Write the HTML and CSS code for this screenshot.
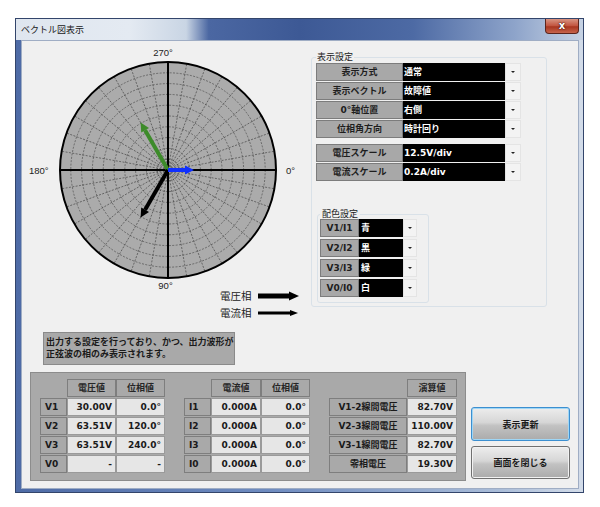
FILE: index.html
```html
<!DOCTYPE html>
<html lang="ja">
<head>
<meta charset="utf-8">
<title>ベクトル図表示</title>
<link rel="stylesheet" href="styles.css">
</head>
<body>
<div class="window">
  <div class="titlebar">
    <span class="title">ベクトル図表示</span>
    <span class="close">x</span>
  </div>
  <div class="client">
    <div class="top">
      <div class="leftcol">
        <svg class="polar" width="289" height="243" viewBox="0 0 289 243">
          <circle cx="146" cy="126" r="108" fill="#ababab"/>
          <g class="grid" transform="translate(146 126)">
            <circle r="10.8"/><circle r="21.6"/><circle r="32.4"/><circle r="43.2"/><circle r="54"/>
            <circle r="64.8"/><circle r="75.6"/><circle r="86.4"/><circle r="97.2"/>
            <line x2="108" transform="rotate(10)"/><line x2="108" transform="rotate(20)"/><line x2="108" transform="rotate(30)"/>
            <line x2="108" transform="rotate(40)"/><line x2="108" transform="rotate(50)"/><line x2="108" transform="rotate(60)"/>
            <line x2="108" transform="rotate(70)"/><line x2="108" transform="rotate(80)"/><line x2="108" transform="rotate(100)"/>
            <line x2="108" transform="rotate(110)"/><line x2="108" transform="rotate(120)"/><line x2="108" transform="rotate(130)"/>
            <line x2="108" transform="rotate(140)"/><line x2="108" transform="rotate(150)"/><line x2="108" transform="rotate(160)"/>
            <line x2="108" transform="rotate(170)"/><line x2="108" transform="rotate(190)"/><line x2="108" transform="rotate(200)"/>
            <line x2="108" transform="rotate(210)"/><line x2="108" transform="rotate(220)"/><line x2="108" transform="rotate(230)"/>
            <line x2="108" transform="rotate(240)"/><line x2="108" transform="rotate(250)"/><line x2="108" transform="rotate(260)"/>
            <line x2="108" transform="rotate(280)"/><line x2="108" transform="rotate(290)"/><line x2="108" transform="rotate(300)"/>
            <line x2="108" transform="rotate(310)"/><line x2="108" transform="rotate(320)"/><line x2="108" transform="rotate(330)"/>
            <line x2="108" transform="rotate(340)"/><line x2="108" transform="rotate(350)"/>
          </g>
          <g class="axes">
            <line x1="38" y1="126" x2="254" y2="126"/>
            <line x1="146" y1="18" x2="146" y2="234"/>
            <circle cx="146" cy="126" r="108"/>
          </g>
          <g class="vec-green">
            <line x1="146" y1="126" x2="123.1" y2="86.3"/>
            <polygon points="118.6,78.5 127,84 119.2,88.5"/>
          </g>
          <g class="vec-black">
            <line x1="146" y1="126" x2="123.1" y2="165.7"/>
            <polygon points="118.6,173.5 127,168 119.2,163.5"/>
          </g>
          <g class="vec-blue">
            <line x1="146" y1="126" x2="164" y2="126"/>
            <polygon points="172,126 163,121.5 163,130.5"/>
          </g>
          <text class="deg" x="141" y="12" text-anchor="middle">270°</text>
          <text class="deg" x="7" y="130">180°</text>
          <text class="deg" x="264" y="130">0°</text>
          <text class="deg" x="143.5" y="245" text-anchor="middle">90°</text>
        </svg>
        <div class="legend">
          <span class="lg-text">電圧相</span>
          <svg width="41" height="12" viewBox="0 0 41 12"><rect x="0" y="3.5" width="32" height="5" fill="#000"/><polygon points="31,1.5 41,6 31,10.5" fill="#000"/></svg>
          <span class="lg-text">電流相</span>
          <svg width="41" height="12" viewBox="0 0 41 12"><rect x="0" y="4.5" width="33" height="3" fill="#000"/><polygon points="32,3 40,6 32,9" fill="#000"/></svg>
        </div>
        <div class="info">出力する設定を行っており、かつ、出力波形が<br>正弦波の相のみ表示されます。</div>
      </div>
      <fieldset class="settings">
        <legend>表示設定</legend>
        <div class="srows">
          <div class="srow"><span class="slabel">表示方式</span><span class="sval">通常</span><span class="sarrow"><i></i></span></div>
          <div class="srow"><span class="slabel">表示ベクトル</span><span class="sval">故障値</span><span class="sarrow"><i></i></span></div>
          <div class="srow"><span class="slabel">0°軸位置</span><span class="sval">右側</span><span class="sarrow"><i></i></span></div>
          <div class="srow"><span class="slabel">位相角方向</span><span class="sval">時計回り</span><span class="sarrow"><i></i></span></div>
        </div>
        <div class="srows scale">
          <div class="srow"><span class="slabel">電圧スケール</span><span class="sval">12.5V/div</span><span class="sarrow"><i></i></span></div>
          <div class="srow"><span class="slabel">電流スケール</span><span class="sval">0.2A/div</span><span class="sarrow"><i></i></span></div>
        </div>
        <fieldset class="colors">
          <legend>配色設定</legend>
          <div class="crow"><span class="clabel">V1/I1</span><span class="cval">青</span><span class="carrow"><i></i></span></div>
          <div class="crow"><span class="clabel">V2/I2</span><span class="cval">黒</span><span class="carrow"><i></i></span></div>
          <div class="crow"><span class="clabel">V3/I3</span><span class="cval">緑</span><span class="carrow"><i></i></span></div>
          <div class="crow"><span class="clabel">V0/I0</span><span class="cval">白</span><span class="carrow"><i></i></span></div>
        </fieldset>
      </fieldset>
    </div>
    <div class="bottom">
      <div class="panel">
        <div class="tbl g1">
          <span class="blank"></span><span class="c hd">電圧値</span><span class="c hd">位相値</span>
          <span class="c lb">V1</span><span class="c v">30.00V</span><span class="c v">0.0°</span>
          <span class="c lb">V2</span><span class="c v">63.51V</span><span class="c v">120.0°</span>
          <span class="c lb">V3</span><span class="c v">63.51V</span><span class="c v">240.0°</span>
          <span class="c lb">V0</span><span class="c v">-</span><span class="c v">-</span>
        </div>
        <div class="tbl g2">
          <span class="blank"></span><span class="c hd">電流値</span><span class="c hd">位相値</span>
          <span class="c lb">I1</span><span class="c v">0.000A</span><span class="c v">0.0°</span>
          <span class="c lb">I2</span><span class="c v">0.000A</span><span class="c v">0.0°</span>
          <span class="c lb">I3</span><span class="c v">0.000A</span><span class="c v">0.0°</span>
          <span class="c lb">I0</span><span class="c v">0.000A</span><span class="c v">0.0°</span>
        </div>
        <div class="tbl g3">
          <span class="blank"></span><span class="c hd">演算値</span>
          <span class="c lb center">V1-2線間電圧</span><span class="c v">82.70V</span>
          <span class="c lb center">V2-3線間電圧</span><span class="c v">110.00V</span>
          <span class="c lb center">V3-1線間電圧</span><span class="c v">82.70V</span>
          <span class="c lb center">零相電圧</span><span class="c v">19.30V</span>
        </div>
      </div>
      <div class="buttons">
        <button class="btn default">表示更新</button>
        <button class="btn">画面を閉じる</button>
      </div>
    </div>
  </div>
</div>
</body>
</html>
```

FILE: styles.css
```css
* { box-sizing: border-box; }

body {
  margin: 0;
  background: #ffffff;
  font-family: "DejaVu Sans", "Noto Sans CJK JP", sans-serif;
  font-size: 9px;
  color: #1a1a1a;
}

.window {
  margin: 18px 0 0 15px;
  width: 569px;
  height: 475px;
  border: 1px solid #33456b;
  padding: 0 4px 3px 5px;
  display: flex;
  flex-direction: column;
  background: linear-gradient(to right, #4e6ba6, #6f8cc0 45%, #a9bcd8 85%, #d3dce9);
}

.titlebar {
  height: 21px;
  margin: 0 -4px 0 -5px;
  padding: 0 4px 0 5px;
  display: flex;
  align-items: flex-start;
  background: linear-gradient(to right, #dfe6ef 0, #e4eaf2 20%, #c9d5e4 30%, #4b67a2 34%, #3d5995 50%, #4d6aa4 70%, #8ea4ca 88%, #c7d3e4 100%);
}

.title {
  font-family: "Noto Sans CJK JP", sans-serif;
  font-size: 9px;
  line-height: 21px;
  color: #202020;
}

.close {
  margin-left: auto;
  width: 34px;
  height: 15px;
  border: 1px solid #5b241c;
  border-top: none;
  border-radius: 0 0 4px 4px;
  background: linear-gradient(#d99482, #c1533e 50%, #a8351f 55%, #c7644c);
  color: #ffffff;
  font: bold 10px/13px "DejaVu Sans", sans-serif;
  text-align: center;
  text-shadow: 0 0 2px #3a0c05, 0 0 1px #3a0c05;
}

.client {
  flex: 1;
  background: #f0f0f0;
  border: 1px solid #9fadc4;
  display: flex;
  flex-direction: column;
}

.top {
  display: flex;
  align-items: flex-start;
}

.leftcol {
  width: 289px;
  display: flex;
  flex-direction: column;
}

.polar {
  display: block;
  margin-top: 3px;
  overflow: visible;
}

.grid circle,
.grid line {
  fill: none;
  stroke: #3e3e3e;
  stroke-width: 0.6;
  stroke-dasharray: 2 1.4;
}

.axes line,
.axes circle {
  fill: none;
  stroke: #000000;
  stroke-width: 2;
}

.vec-green line { stroke: #3d8b2a; stroke-width: 4; }
.vec-green polygon { fill: #3d8b2a; }
.vec-black line { stroke: #000000; stroke-width: 4; }
.vec-black polygon { fill: #000000; }
.vec-blue line { stroke: #1030ff; stroke-width: 4; }
.vec-blue polygon { fill: #1030ff; }

.deg {
  font-family: "Liberation Sans", sans-serif;
  font-size: 9.5px;
  fill: #222222;
}

.legend {
  margin-left: 198px;
  display: grid;
  grid-template-columns: 32px 41px;
  grid-auto-rows: 17px;
  column-gap: 6px;
  align-items: center;
}

.lg-text {
  font-family: "Noto Sans CJK JP", sans-serif;
  font-size: 10.5px;
  line-height: 17px;
  color: #222222;
  white-space: nowrap;
}

.legend svg { display: block; }

.info {
  margin: 11px 0 0 21px;
  width: 192px;
  height: 33px;
  padding: 3px 0 4px 2px;
  background: #a9a9a9;
  border: 1px solid #8a8a8a;
  font-weight: bold;
  font-size: 9px;
  line-height: 12px;
  white-space: nowrap;
  color: #1a1a1a;
}

/* settings */
fieldset {
  margin: 0;
  min-width: 0;
}

.settings {
  margin-top: 10px;
  width: 236px;
  padding: 0 4px 3px 4px;
  border: 1px solid #d9e1e8;
  border-radius: 3px;
}

.settings > legend {
  padding: 0 1px;
  font-family: "Noto Sans CJK JP", sans-serif;
  font-size: 9px;
  line-height: 12px;
  color: #222222;
}

.srows {
  display: flex;
  flex-direction: column;
  gap: 1px;
}

.srows.scale { margin-top: 6px; }

.srow, .crow {
  display: flex;
  height: 18px;
}

.slabel, .clabel {
  background: #a8a8a8;
  border: 1px solid #7c7c7c;
  font-weight: bold;
  line-height: 16px;
  text-align: center;
  white-space: nowrap;
  color: #1e1e1e;
}

.slabel { width: 87px; }

.sval, .cval {
  background: #000000;
  color: #ffffff;
  font-weight: bold;
  line-height: 18px;
  padding-left: 1px;
  white-space: nowrap;
}

.sval { width: 102px; }

.sarrow, .carrow {
  display: flex;
  align-items: center;
  justify-content: center;
  background: #f3f3f3;
  border: 1px solid #e4e4e4;
}

.sarrow { width: 16px; }
.carrow { width: 14px; }

.sarrow i, .carrow i {
  display: block;
  width: 0;
  height: 0;
  border-left: 2px solid transparent;
  border-right: 2px solid transparent;
  border-top: 2px solid #222222;
}

.colors {
  margin: 28px 0 0 1px;
  width: 112px;
  padding: 0 2px 5px 2px;
  border: 1px solid #d9e1e8;
  border-radius: 3px;
  display: flex;
  flex-direction: column;
  gap: 2px;
}

.colors > legend {
  padding: 0 2px;
  font-family: "Noto Sans CJK JP", sans-serif;
  font-size: 9px;
  line-height: 10px;
  color: #222222;
}

.clabel { width: 39px; }
.cval { width: 44px; padding-left: 2px; }

/* bottom */
.bottom {
  display: flex;
  align-items: flex-start;
  margin-top: 7px;
}

.panel {
  margin-left: 8px;
  width: 436px;
  height: 109px;
  padding: 6px 8px 7px 9px;
  background: #a9a9a9;
  border: 1px solid #8c8c8c;
  display: flex;
  gap: 19px;
}

.tbl {
  display: grid;
  grid-auto-rows: 18px;
  row-gap: 1px;
}

.g1 { grid-template-columns: 27px 49px 49px; }
.g2 { grid-template-columns: 27px 50px 49px; }
.g3 { grid-template-columns: 78px 50px; }

.c {
  border: 1px solid #7e7e7e;
  font-weight: bold;
  line-height: 16px;
  white-space: nowrap;
  color: #1a1a1a;
}

.hd {
  background: #a9a9a9;
  text-align: center;
  color: #262626;
}

.lb {
  background: #a9a9a9;
  padding-left: 4px;
}

.lb.center {
  padding-left: 0;
  text-align: center;
}

.v {
  background: #e6e6e6;
  text-align: right;
  padding-right: 3px;
  border-color: #9a9a9a;
}

.buttons {
  margin: 35px 0 0 5px;
  display: flex;
  flex-direction: column;
  gap: 5px;
}

.btn {
  width: 99px;
  height: 33px;
  border: 1px solid #707070;
  border-radius: 3px;
  background: linear-gradient(#ededed, #d6d6d6 45%, #c2c2c2 55%, #ababab);
  box-shadow: inset 0 0 0 1px #f2f2f2;
  font-family: "Noto Sans CJK JP", sans-serif;
  font-weight: bold;
  font-size: 9px;
  color: #1a1a1a;
  padding: 0;
}

.btn.default {
  height: 34px;
  border-color: #3c8fd0;
  box-shadow: inset 0 0 0 1px #9fd6f5;
}
```
